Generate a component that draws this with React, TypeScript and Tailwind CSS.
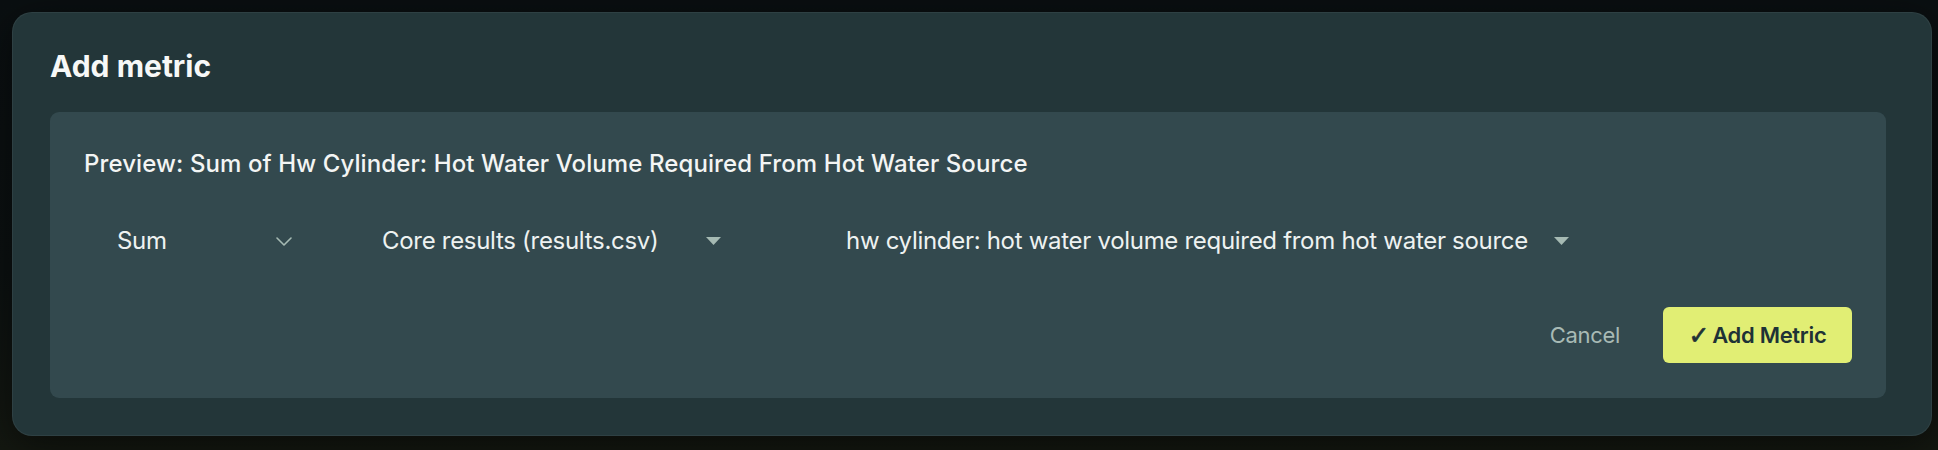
import React from 'react';

const ChevronDown = () => (
  <svg width="16" height="9" viewBox="0 0 16 9" fill="none" className="text-[#a6bab3]">
    <path d="M1 1l7 7 7-7" stroke="currentColor" strokeWidth="1.6" strokeLinecap="round" strokeLinejoin="round" />
  </svg>
);

const Caret = () => (
  <svg width="15" height="8" viewBox="0 0 15 8" className="text-[#a6bab3]">
    <path d="M0 0h15L7.5 8z" fill="currentColor" />
  </svg>
);

const App: React.FC = () => {
  return (
    <div
      className="min-h-[450px] w-full bg-[linear-gradient(180deg,#0a0f11_0%,#0c1111_60%,#141811_100%)] pt-[12px] pl-[12px] font-['Inter','Liberation_Sans',sans-serif]"
    >
      {/* Modal */}
      <div className="w-[1920px] rounded-[20px] border border-white/[0.05] bg-[#233639] pt-[35px] pb-[37px] pl-[37px] pr-[45px] shadow-[0_10px_40px_rgba(0,0,0,0.5)]">
        <h2 className="text-[30px] leading-[36px] font-bold text-[#f7f8f7]">Add metric</h2>

        <div className="mt-[28px] rounded-[9px] bg-[#33494e] pt-[38px] pb-[35px] pl-[34px] pr-[34px]">
          <p className="text-[24px] leading-[28px] font-medium tracking-[0.1px] text-[#f3f5f4]">
            Preview: Sum of Hw Cylinder: Hot Water Volume Required From Hot Water Source
          </p>

          {/* Selects row */}
          <div className="mt-[39px] flex h-[48px] items-center text-[24px] tracking-[-0.3px] text-[#eef2f1]">
            <div className="flex w-[225px] items-center justify-between pl-[33px] pr-[17px]">
              <span>Sum</span>
              <ChevronDown />
            </div>
            <div className="ml-[73px] flex items-center">
              <span className="w-[324px]">Core results (results.csv)</span>
              <Caret />
            </div>
            <div className="ml-[125px] flex items-center">
              <span className="w-[708px]">hw cylinder: hot water volume required from hot water source</span>
              <Caret />
            </div>
          </div>

          {/* Actions */}
          <div className="mt-[42px] flex items-center justify-end">
            <button className="mr-[43px] text-[22px] tracking-[-0.3px] text-[#a8bab5]">Cancel</button>
            <button className="flex h-[56px] w-[189px] items-center justify-center gap-[3px] rounded-[6px] bg-[#e1ee74] text-[22px] font-semibold tracking-[-0.3px] text-[#1e3236]">
              <span className="font-['DejaVu_Sans',sans-serif] text-[25px] leading-none [-webkit-text-stroke:0.7px_#1e3236]">✓</span>
              <span>Add Metric</span>
            </button>
          </div>
        </div>
      </div>
    </div>
  );
};

export default App;
